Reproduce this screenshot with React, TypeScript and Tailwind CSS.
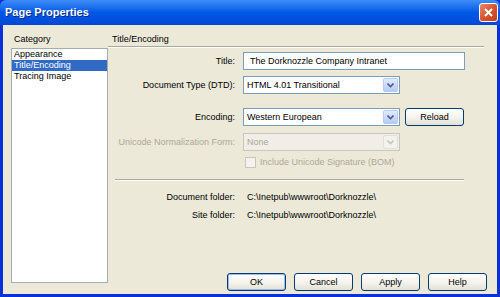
import React from 'react';

const font = { fontFamily: '"Liberation Sans", Arial, sans-serif' };

const DropArrow: React.FC<{ disabled?: boolean }> = ({ disabled }) => (
  <div
    className={`flex h-full w-[15px] items-center justify-center rounded-[2px] border ${
      disabled ? 'border-[#E2E0D6] bg-[#F3F2EC]' : 'border-[#B9CBF3] bg-gradient-to-b from-[#E3EBFD] to-[#B6CAF6]'
    }`}
  >
    <svg width="7" height="5" viewBox="0 0 7 5">
      <path d="M0.5 0.5 L3.5 3.5 L6.5 0.5" fill="none" stroke={disabled ? '#C9C7BA' : '#4D6185'} strokeWidth="1.6" />
    </svg>
  </div>
);

const Select: React.FC<{ value: string; disabled?: boolean }> = ({ value, disabled }) => (
  <div
    className={`flex h-[18px] w-[157px] items-center border p-[1px] ${
      disabled ? 'border-[#C9C7BA] bg-[#F0EEE6] text-[#ACA899]' : 'border-[#7F9DB9] bg-white text-black'
    }`}
  >
    <span className="flex-1 pl-[2px] truncate">{value}</span>
    <DropArrow disabled={disabled} />
  </div>
);

const Button: React.FC<{ label: string; primary?: boolean }> = ({ label, primary }) => (
  <div
    className={`flex h-[18px] w-[59px] items-center justify-center rounded-[3px] border border-[#003C74] bg-gradient-to-b from-white via-[#F5F4EE] to-[#E3E1D6] text-black ${
      primary ? 'shadow-[inset_0_0_0_1px_#9DB8F0]' : ''
    }`}
  >
    {label}
  </div>
);

const Label: React.FC<{ children: React.ReactNode; muted?: boolean }> = ({ children, muted }) => (
  <div className={`w-[126px] shrink-0 pr-[1px] text-right ${muted ? 'text-[#ACA899]' : 'text-black'}`}>{children}</div>
);

export default function App() {
  const items = ['Appearance', 'Title/Encoding', 'Tracing Image'];
  return (
    <div className="flex h-[297px] w-[500px] flex-col bg-[#0831D9] text-[9px] leading-[11px]" style={font}>
      {/* title bar */}
      <div className="flex h-[25px] shrink-0 items-center rounded-t-[6px] bg-gradient-to-b from-[#3C8CF8] via-[#0058E6] to-[#0347D6] pl-[5px] pr-[2px]">
        <span className="flex-1 text-[11px] font-bold text-white [text-shadow:1px_1px_0_#0A2A8A]">Page Properties</span>
        <div className="flex h-[19px] w-[19px] items-center justify-center rounded-[3px] border border-white bg-gradient-to-br from-[#E8896A] via-[#D9532C] to-[#C2401C]">
          <svg width="9" height="9" viewBox="0 0 9 9">
            <path d="M1 1 L8 8 M8 1 L1 8" stroke="white" strokeWidth="2" />
          </svg>
        </div>
      </div>

      {/* body */}
      <div className="mx-[3px] mb-[3px] flex flex-1 bg-[#ECE9D8]">
        {/* category column */}
        <div className="flex w-[105px] shrink-0 flex-col pb-[11px] pl-[8px]">
          <div className="mb-[2px] mt-[7px] h-[14px] pl-[3px] leading-[14px]">Category</div>
          <div className="flex-1 border border-[#A5ACB2] bg-white">
            {items.map((it) => (
              <div
                key={it}
                className={`h-[11px] pl-[2px] leading-[11px] ${
                  it === 'Title/Encoding' ? 'bg-[#316AC5] text-white' : 'text-black'
                }`}
              >
                {it}
              </div>
            ))}
          </div>
        </div>

        {/* settings column */}
        <div className="flex flex-1 flex-col pl-[2px] pr-[10px]">
          <div className="mt-[7px] h-[14px] pl-[2px] leading-[14px]">Title/Encoding</div>
          <div className="-ml-[2px] mr-[3px] h-[2px] border-t border-b border-t-[#ACA899] border-b-white" />

          <div className="mt-[4px] flex items-center gap-[7px]">
            <Label>Title:</Label>
            <div className="flex h-[18px] w-[222px] items-center border border-[#7F9DB9] bg-white pl-[6px]">
              The Dorknozzle Company Intranet
            </div>
          </div>

          <div className="mt-[6px] flex items-center gap-[7px]">
            <Label>Document Type (DTD):</Label>
            <Select value="HTML 4.01 Transitional" />
          </div>

          <div className="mt-[14px] flex items-center gap-[7px]">
            <Label>Encoding:</Label>
            <Select value="Western European" />
            <div className="-ml-[2px]">
              <Button label="Reload" />
            </div>
          </div>

          <div className="mt-[7px] flex items-center gap-[7px]">
            <Label muted>Unicode Normalization Form:</Label>
            <Select value="None" disabled />
          </div>

          <div className="mt-[5px] flex h-[13px] items-center pl-[135px]">
            <div className="h-[11px] w-[11px] border border-[#C9C7BA] bg-[#F3F2EC]" />
            <span className="ml-[4px] text-[#ACA899]">Include Unicode Signature (BOM)</span>
          </div>

          <div className="ml-[5px] mr-[23px] mt-[10px] h-[2px] border-t border-b border-t-[#ACA899] border-b-white" />

          <div className="mt-[9px] flex h-[14px] items-center gap-[11px]">
            <Label>Document folder:</Label>
            <span>C:\Inetpub\wwwroot\Dorknozzle\</span>
          </div>
          <div className="mt-[4px] flex h-[14px] items-center gap-[11px]">
            <Label>Site folder:</Label>
            <span>C:\Inetpub\wwwroot\Dorknozzle\</span>
          </div>

          <div className="flex-1" />

          <div className="mb-[3px] flex justify-end gap-[8px]">
            <Button label="OK" primary />
            <Button label="Cancel" />
            <Button label="Apply" />
            <Button label="Help" />
          </div>
        </div>
      </div>
    </div>
  );
}
